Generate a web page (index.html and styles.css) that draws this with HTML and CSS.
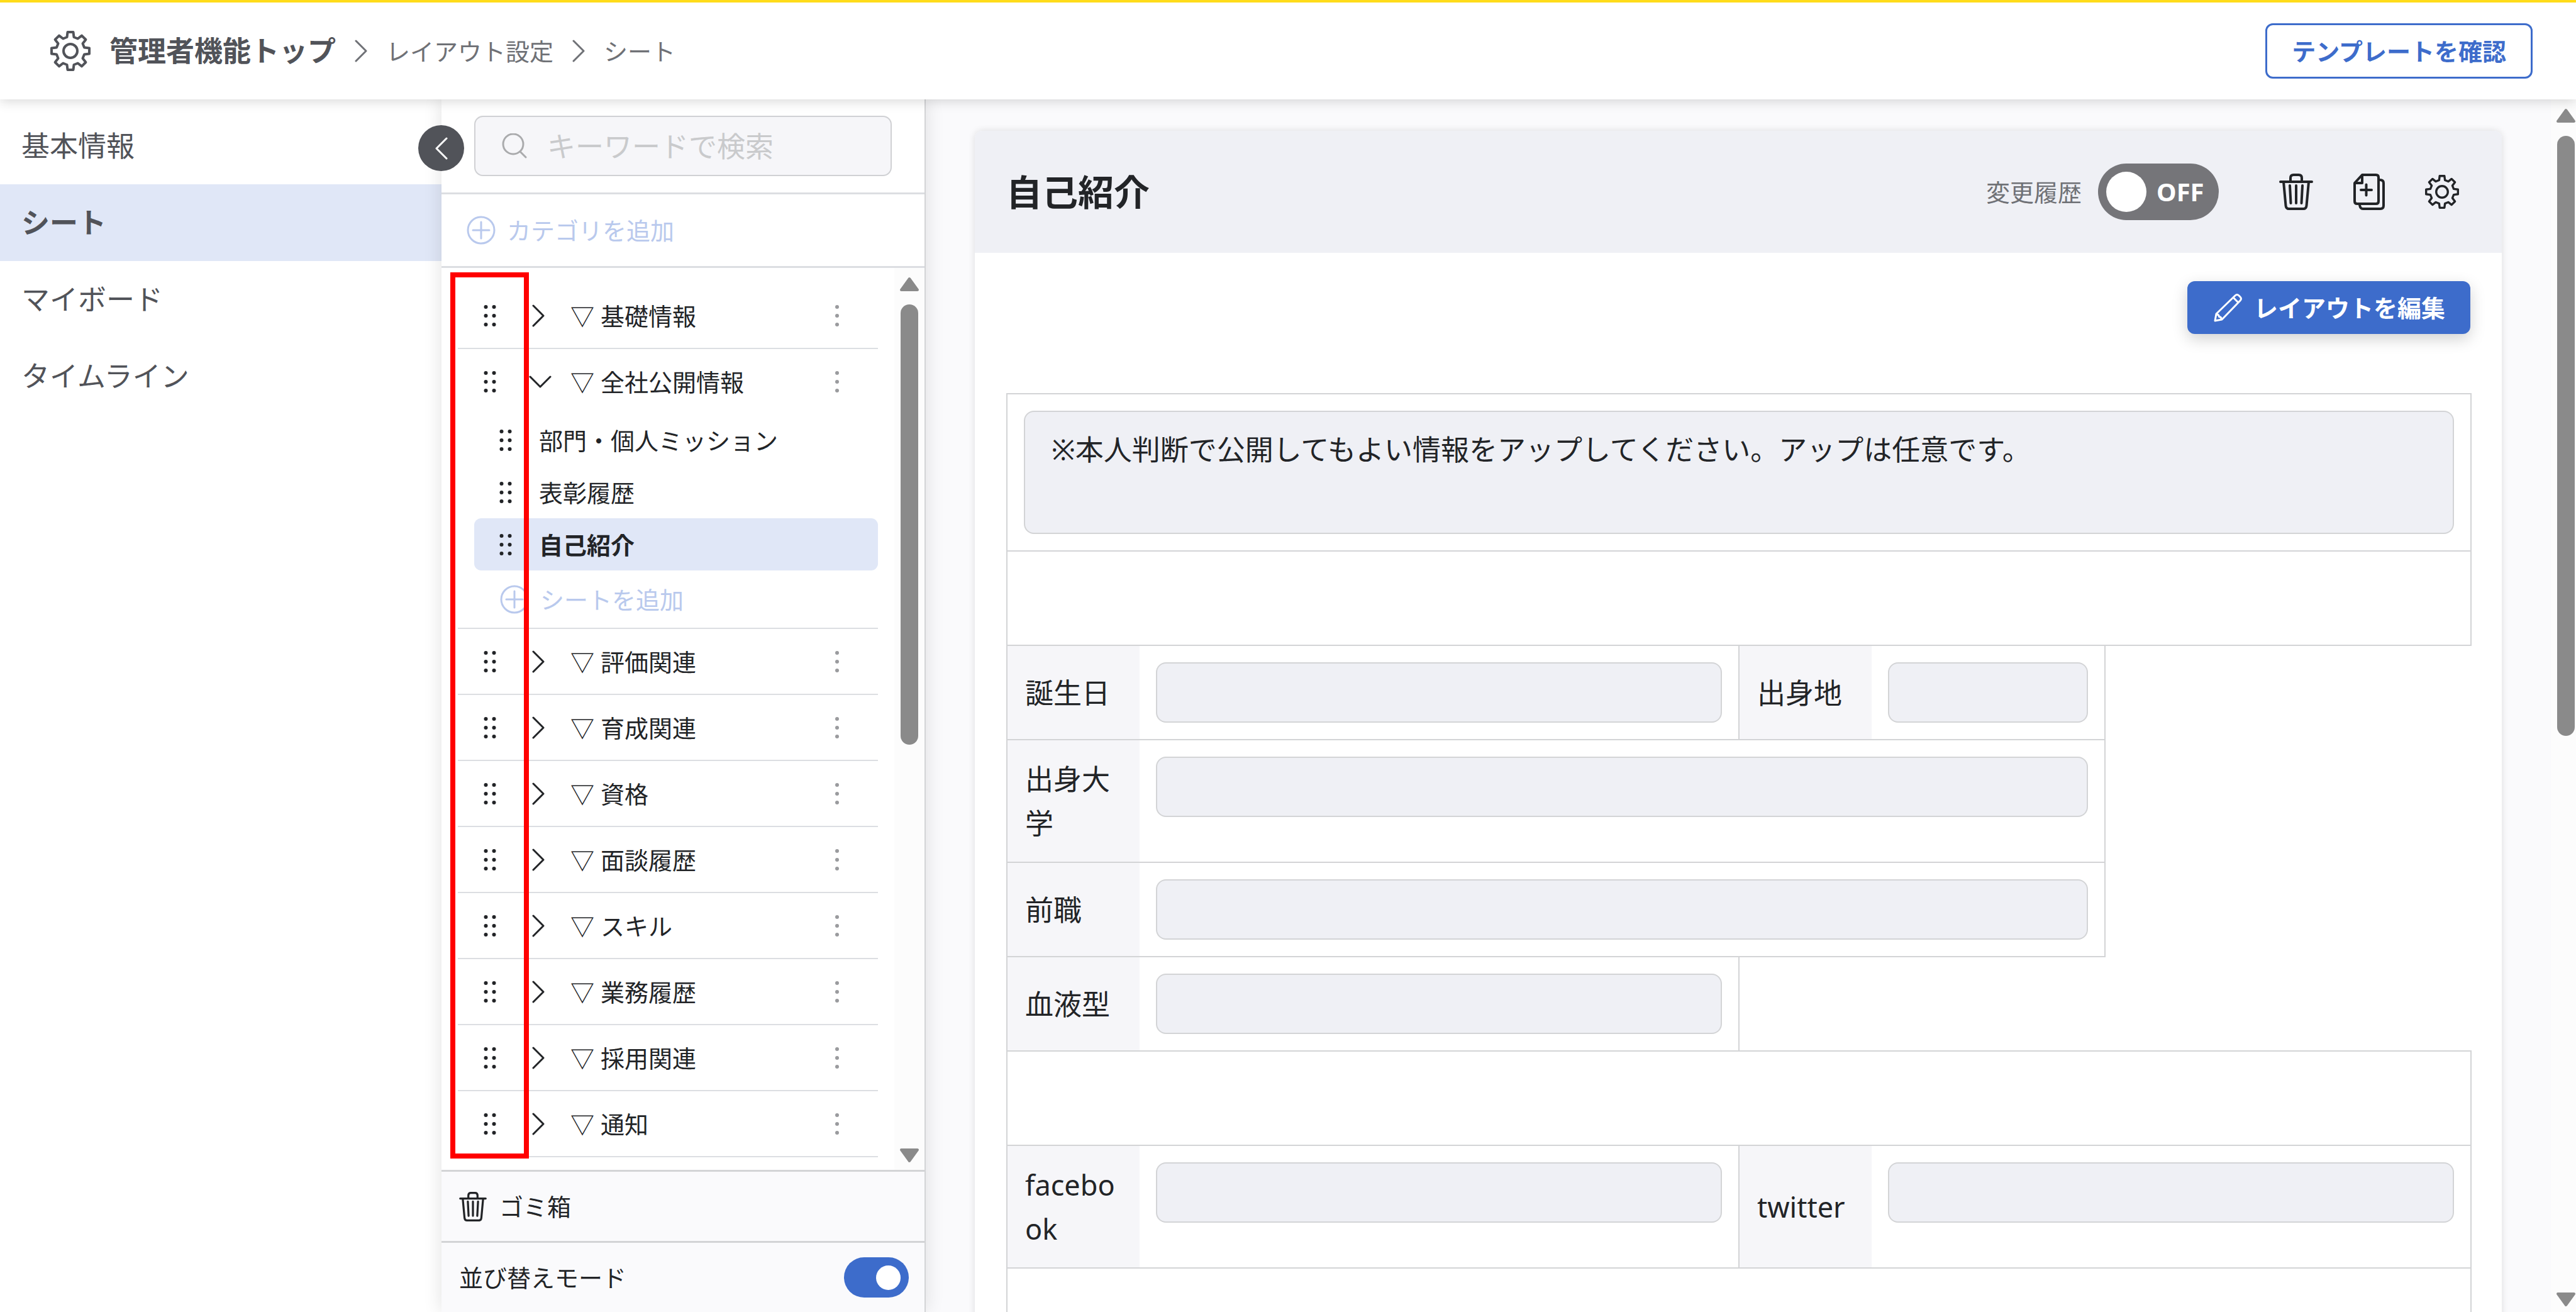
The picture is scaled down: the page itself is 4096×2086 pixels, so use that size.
FILE: index.html
```html
<!DOCTYPE html>
<html lang="ja">
<head>
  <meta charset="UTF-8" />
  <meta name="viewport" content="width=device-width, initial-scale=1.0"/>
  <title>シート - レイアウト設定</title>
  <link rel="stylesheet" href="styles.css">
</head>
<body>

  <!-- Icon set -->
  <svg class="icon-set" aria-hidden="true">
    <symbol id="gear" viewBox="-32 -32 64 64">
      <path d="M-4.5-30L4.5-30 5.5-22 11.7-19.5 18-24.4 24.4-18 19.5-11.7 22-5.5 30-4.5 30 4.5 22 5.5 19.5 11.7 24.4 18 18 24.4 11.7 19.5 5.5 22 4.5 30-4.5 30-5.5 22-11.7 19.5-18 24.4-24.4 18-19.5 11.7-22 5.5-30 4.5-30-4.5-22-5.5-19.5-11.7-24.4-18-18-24.4-11.7-19.5-5.5-22Z"/>
      <circle r="11"/>
    </symbol>
    <symbol id="trash" viewBox="0 0 54 58">
      <path d="M2 13H52M18 12V7q0-5 5-5h8q5 0 5 5v5M7 13l3.500 38q.5 5 5 5h23q4.500 0 5-5L47 13M17 19l1.500 28M27 19v28M37 19l-1.500 28"/>
    </symbol>
    <symbol id="copy" viewBox="0 0 50 58">
      <path d="M14 2H36q4 0 4 4V44q0 4-4 4H6q-4 0-4-4V15ZM14 3V15H3M42 10q6 0 6 5V51q0 5-5 5H15q-4 0-5-6M20.500 17.500v17M12 26h17"/>
    </symbol>
    <symbol id="pencil" viewBox="0 0 46 46">
      <path d="M2 44l2-11L34 4q3-3 6 0l2 2q3 3 0 6L13 42ZM31 7l8 8M5 34q3 0 3.500 3.500Q12 38 12 41"/>
    </symbol>
    <symbol id="right" viewBox="0 0 20 36">
      <path d="M2 2l16 16L2 34"/>
    </symbol>
    <symbol id="down" viewBox="0 0 36 20">
      <path d="M2 2l16 16L34 2"/>
    </symbol>
    <symbol id="plus" viewBox="0 0 46 46">
      <path d="M23 10v26M10 23h26"/>
      <circle cx="23" cy="23" r="21"/>
    </symbol>
    <symbol id="search" viewBox="0 0 40 40">
      <circle cx="18" cy="17" r="16"/>
      <path d="M29 29l9 9"/>
    </symbol>
    <symbol id="drag" viewBox="0 0 20 36">
      <circle cx="3.500" cy="4" r="3"/><circle cx="16.500" cy="4" r="3"/>
      <circle cx="3.500" cy="18" r="3"/><circle cx="16.500" cy="18" r="3"/>
      <circle cx="3.500" cy="32" r="3"/><circle cx="16.500" cy="32" r="3"/>
    </symbol>
    <symbol id="more" viewBox="0 0 14 36">
      <circle cx="7" cy="4" r="3"/><circle cx="7" cy="18" r="3"/><circle cx="7" cy="32" r="3"/>
    </symbol>
    <symbol id="scroll-up" viewBox="0 0 32 24">
      <path d="M16 3L29 21H3Z"/>
    </symbol>
    <symbol id="scroll-down" viewBox="0 0 32 24">
      <path d="M16 21L29 3H3Z"/>
    </symbol>
  </svg>

  <header class="header">
    <nav class="breadcrumb" aria-label="パンくず">
      <svg class="icon icon-lg"><use href="#gear"/></svg>
      <a class="breadcrumb-top" href="#">管理者機能トップ</a>
      <svg class="chevron"><use href="#right"/></svg>
      <a href="#">レイアウト設定</a>
      <svg class="chevron"><use href="#right"/></svg>
      <a href="#">シート</a>
    </nav>
    <button type="button" class="btn btn-outline">テンプレートを確認</button>
  </header>

  <div class="layout">
    <nav class="menu" aria-label="設定メニュー">
      <a href="#">基本情報</a>
      <a href="#" class="active">シート</a>
      <a href="#">マイボード</a>
      <a href="#">タイムライン</a>
    </nav>

    <aside class="panel">
      <button type="button" class="collapse" aria-label="メニューを閉じる">
        <svg class="chevron flip"><use href="#right"/></svg>
      </button>

      <div class="search">
        <label class="search-box">
          <svg class="search-icon"><use href="#search"/></svg>
          <input type="text" placeholder="キーワードで検索" aria-label="キーワードで検索">
        </label>
      </div>

      <button type="button" class="add add-category"><svg><use href="#plus"/></svg>カテゴリを追加</button>

      <div class="tree">
        <ul class="categories">
          <li>
            <div class="category">
              <svg class="drag"><use href="#drag"/></svg>
              <button type="button" class="toggle" aria-label="開く"><svg class="chevron"><use href="#right"/></svg></button>
              <span>▽ 基礎情報</span>
              <button type="button" class="more" aria-label="メニュー"><svg><use href="#more"/></svg></button>
            </div>
          </li>
          <li>
            <div class="category">
              <svg class="drag"><use href="#drag"/></svg>
              <button type="button" class="toggle" aria-label="閉じる"><svg class="chevron-down"><use href="#down"/></svg></button>
              <span>▽ 全社公開情報</span>
              <button type="button" class="more" aria-label="メニュー"><svg><use href="#more"/></svg></button>
            </div>
            <ul class="sheets">
              <li class="sheet"><svg class="drag"><use href="#drag"/></svg><a href="#">部門・個人ミッション</a></li>
              <li class="sheet"><svg class="drag"><use href="#drag"/></svg><a href="#">表彰履歴</a></li>
              <li class="sheet active"><svg class="drag"><use href="#drag"/></svg><a href="#">自己紹介</a></li>
            </ul>
            <button type="button" class="add add-sheet"><svg><use href="#plus"/></svg>シートを追加</button>
          </li>
          <li>
            <div class="category">
              <svg class="drag"><use href="#drag"/></svg>
              <button type="button" class="toggle" aria-label="開く"><svg class="chevron"><use href="#right"/></svg></button>
              <span>▽ 評価関連</span>
              <button type="button" class="more" aria-label="メニュー"><svg><use href="#more"/></svg></button>
            </div>
          </li>
          <li>
            <div class="category">
              <svg class="drag"><use href="#drag"/></svg>
              <button type="button" class="toggle" aria-label="開く"><svg class="chevron"><use href="#right"/></svg></button>
              <span>▽ 育成関連</span>
              <button type="button" class="more" aria-label="メニュー"><svg><use href="#more"/></svg></button>
            </div>
          </li>
          <li>
            <div class="category">
              <svg class="drag"><use href="#drag"/></svg>
              <button type="button" class="toggle" aria-label="開く"><svg class="chevron"><use href="#right"/></svg></button>
              <span>▽ 資格</span>
              <button type="button" class="more" aria-label="メニュー"><svg><use href="#more"/></svg></button>
            </div>
          </li>
          <li>
            <div class="category">
              <svg class="drag"><use href="#drag"/></svg>
              <button type="button" class="toggle" aria-label="開く"><svg class="chevron"><use href="#right"/></svg></button>
              <span>▽ 面談履歴</span>
              <button type="button" class="more" aria-label="メニュー"><svg><use href="#more"/></svg></button>
            </div>
          </li>
          <li>
            <div class="category">
              <svg class="drag"><use href="#drag"/></svg>
              <button type="button" class="toggle" aria-label="開く"><svg class="chevron"><use href="#right"/></svg></button>
              <span>▽ スキル</span>
              <button type="button" class="more" aria-label="メニュー"><svg><use href="#more"/></svg></button>
            </div>
          </li>
          <li>
            <div class="category">
              <svg class="drag"><use href="#drag"/></svg>
              <button type="button" class="toggle" aria-label="開く"><svg class="chevron"><use href="#right"/></svg></button>
              <span>▽ 業務履歴</span>
              <button type="button" class="more" aria-label="メニュー"><svg><use href="#more"/></svg></button>
            </div>
          </li>
          <li>
            <div class="category">
              <svg class="drag"><use href="#drag"/></svg>
              <button type="button" class="toggle" aria-label="開く"><svg class="chevron"><use href="#right"/></svg></button>
              <span>▽ 採用関連</span>
              <button type="button" class="more" aria-label="メニュー"><svg><use href="#more"/></svg></button>
            </div>
          </li>
          <li>
            <div class="category">
              <svg class="drag"><use href="#drag"/></svg>
              <button type="button" class="toggle" aria-label="開く"><svg class="chevron"><use href="#right"/></svg></button>
              <span>▽ 通知</span>
              <button type="button" class="more" aria-label="メニュー"><svg><use href="#more"/></svg></button>
            </div>
          </li>
        </ul>
        <div class="scrollbar scrollbar-tree">
          <svg><use href="#scroll-up"/></svg>
          <div class="rail"><div class="thumb"></div></div>
          <svg><use href="#scroll-down"/></svg>
        </div>
        <div class="highlight"></div>
      </div>

      <div class="panel-row">
        <a href="#" class="trash-link"><svg class="icon icon-sm"><use href="#trash"/></svg>ゴミ箱</a>
      </div>
      <div class="panel-row">
        <label for="sortMode">並び替えモード</label>
        <input type="checkbox" id="sortMode" class="switch-sm" checked>
      </div>
    </aside>

    <main class="main">
      <section class="card">
        <div class="card-header">
          <h1>自己紹介</h1>
          <label class="history-label" for="history">変更履歴</label>
          <label class="switch"><input type="checkbox" id="history"><span>OFF</span></label>
          <div class="actions">
            <button type="button" aria-label="削除"><svg class="icon"><use href="#trash"/></svg></button>
            <button type="button" aria-label="複製"><svg class="icon"><use href="#copy"/></svg></button>
            <button type="button" aria-label="設定"><svg class="icon"><use href="#gear"/></svg></button>
          </div>
        </div>

        <div class="card-body">
          <button type="button" class="btn btn-primary"><svg><use href="#pencil"/></svg>レイアウトを編集</button>

          <form class="sheet-grid">
            <div class="cell span-4">
              <textarea class="field note" aria-label="メモ" readonly>※本人判断で公開してもよい情報をアップしてください。アップは任意です。</textarea>
            </div>
            <div class="cell span-4"></div>
            <div class="cell span-2">
              <label for="birthday">誕生日</label>
              <input type="text" class="field" id="birthday" readonly>
            </div>
            <div class="cell">
              <label for="birthplace">出身地</label>
              <input type="text" class="field" id="birthplace" readonly>
            </div>
            <div class="cell span-3 row-start">
              <label for="university">出身大学</label>
              <input type="text" class="field" id="university" readonly>
            </div>
            <div class="cell span-3 row-start">
              <label for="previousJob">前職</label>
              <input type="text" class="field" id="previousJob" readonly>
            </div>
            <div class="cell span-2 row-start">
              <label for="bloodType">血液型</label>
              <input type="text" class="field" id="bloodType" readonly>
            </div>
            <div class="cell span-4"></div>
            <div class="cell span-2">
              <label for="facebook">facebook</label>
              <input type="text" class="field" id="facebook" readonly>
            </div>
            <div class="cell span-2">
              <label for="twitter">twitter</label>
              <input type="text" class="field" id="twitter" readonly>
            </div>
            <div class="cell span-4"></div>
          </form>
        </div>
      </section>
    </main>

    <div class="scrollbar scrollbar-main">
      <svg><use href="#scroll-up"/></svg>
      <div class="rail"><div class="thumb"></div></div>
      <svg><use href="#scroll-down"/></svg>
    </div>
  </div>

</body>
</html>
```
FILE: styles.css
```css
* {
  box-sizing: border-box;
  font-family: "Noto Sans", "Noto Sans CJK JP", sans-serif;
}

body {
  margin: 0;
  height: 100vh;
  display: flex;
  flex-direction: column;
  overflow: hidden;
  font-size: 38px;
  line-height: 56px;
  color: #222427;
  background: #fff;
}

a {
  color: inherit;
  text-decoration: none;
}

ul {
  list-style: none;
  margin: 0;
  padding: 0;
}

button {
  padding: 0;
  border: none;
  background: none;
  color: inherit;
  font-size: 38px;
  line-height: 56px;
  cursor: pointer;
}

svg {
  display: block;
  flex-shrink: 0;
  fill: none;
  stroke: currentColor;
  stroke-width: 4;
  stroke-linejoin: round;
  stroke-linecap: round;
}

.icon-set {
  display: none;
}

.icon {
  width: 54px;
  height: 58px;
}

.icon-lg {
  width: 64px;
  height: 64px;
}

.icon-sm {
  width: 44px;
  height: 47px;
}

.chevron {
  width: 20px;
  height: 36px;
  stroke-width: 3;
}

.chevron-down {
  width: 36px;
  height: 20px;
  stroke-width: 3;
}

.drag,
.more svg {
  width: 20px;
  height: 36px;
  fill: currentColor;
  stroke: none;
}

/* Header */
.header {
  position: relative;
  z-index: 2;
  flex-shrink: 0;
  display: flex;
  align-items: center;
  justify-content: space-between;
  height: 158px;
  padding: 0 69px 0 80px;
  border-top: 4px solid #ffdc1a;
  background: #fff;
  box-shadow: 0 3px 18px rgba(0, 0, 0, 0.16);
  color: #515359;
}

.breadcrumb {
  display: flex;
  align-items: center;
  gap: 30px;
  color: #6f7176;
}

.breadcrumb .icon-lg,
.breadcrumb-top {
  color: #515359;
}

.breadcrumb-top {
  font-size: 45px;
  font-weight: 700;
}

.btn {
  display: flex;
  align-items: center;
  border-radius: 12px;
  font-weight: 700;
}

.btn-outline {
  height: 88px;
  padding: 0 39px;
  border: 3px solid #3d6ccb;
  color: #3d6ccb;
}

.btn-primary {
  gap: 18px;
  height: 84px;
  margin-left: auto;
  padding: 0 40px 0 42px;
  background: #3d6ccb;
  color: #fff;
  box-shadow: 0 8px 24px rgba(0, 0, 0, 0.18);
}

.btn-primary svg {
  width: 46px;
  height: 46px;
  stroke-width: 3;
}

/* Left menu */
.layout {
  flex: 1;
  min-height: 0;
  display: flex;
}

.menu {
  width: 702px;
  flex-shrink: 0;
  padding-top: 13px;
  font-size: 45px;
  color: #515359;
}

.menu a {
  display: flex;
  align-items: center;
  height: 122px;
  padding-left: 34px;
}

.menu .active {
  background: #e0e7f7;
  font-weight: 700;
}

/* Sheet panel */
.panel {
  position: relative;
  z-index: 1;
  width: 770px;
  flex-shrink: 0;
  display: flex;
  flex-direction: column;
  border-right: 2px solid #d3d4d6;
  background: #fff;
  box-shadow: 0 0 28px rgba(0, 0, 0, 0.12);
}

.collapse {
  position: absolute;
  top: 41px;
  left: -37px;
  display: flex;
  align-items: center;
  justify-content: center;
  width: 73px;
  height: 73px;
  border-radius: 50%;
  background: #515359;
  color: #fff;
}

.flip {
  transform: scaleX(-1);
}

.search {
  padding: 26px 52px;
  border-bottom: 3px solid #dcdee2;
}

.search-box {
  display: flex;
  align-items: center;
  gap: 32px;
  height: 96px;
  padding: 0 42px;
  border: 2px solid #d0d1d4;
  border-radius: 14px;
  background: #f6f6f9;
}

.search-icon {
  width: 40px;
  height: 40px;
  stroke-width: 3;
  color: #aaabad;
}

.search-box input {
  flex: 1;
  min-width: 0;
  padding: 0;
  border: none;
  outline: none;
  background: none;
  font-size: 45px;
}

.search-box input::placeholder {
  color: #c9cacc;
}

.add {
  display: flex;
  align-items: center;
  gap: 18px;
  color: #b9c9ed;
}

.add svg {
  width: 46px;
  height: 46px;
  stroke-width: 3;
}

.add-category {
  height: 117px;
  padding-left: 40px;
  border-bottom: 3px solid #dcdee2;
}

.add-sheet {
  height: 91px;
  padding-left: 67px;
}

.tree {
  position: relative;
  flex: 1;
  min-height: 0;
  display: flex;
}

.categories {
  flex: 1;
  padding: 24px 26px 0 26px;
}

.categories > li {
  border-bottom: 2px solid #dcdee2;
}

.category {
  display: flex;
  align-items: center;
  height: 103px;
  padding: 0 55px 0 41px;
}

.toggle {
  width: 36px;
  margin: 0 30px 0 52px;
  display: flex;
}

.toggle .chevron {
  margin-left: 5px;
}

.more {
  margin-left: auto;
  color: #9a9b9e;
}

.sheet {
  display: flex;
  align-items: center;
  gap: 43px;
  height: 83px;
  margin-left: 26px;
  padding-left: 40px;
  border-radius: 11px;
}

.sheet.active {
  background: #e0e7f7;
  font-weight: 700;
}

.highlight {
  position: absolute;
  top: 7px;
  bottom: 18px;
  left: 14px;
  width: 125px;
  border: 8px solid #f00;
}

.panel-row {
  display: flex;
  align-items: center;
  justify-content: space-between;
  height: 113px;
  padding: 0 25px 0 28px;
  border-top: 3px solid #d3d4d6;
  background: #fafafc;
}

.trash-link {
  display: flex;
  align-items: center;
  gap: 20px;
}

.switch-sm {
  appearance: none;
  display: flex;
  align-items: center;
  justify-content: flex-end;
  width: 103px;
  height: 64px;
  margin: 0;
  padding: 0 13px;
  border-radius: 32px;
  background: #3d6ccb;
}

.switch-sm::before {
  content: "";
  width: 39px;
  height: 39px;
  border-radius: 50%;
  background: #fff;
}

/* Scrollbars */
.scrollbar {
  flex-shrink: 0;
  display: flex;
  flex-direction: column;
  align-items: center;
  gap: 20px;
  background: #fcfcfc;
  color: #8a8a8a;
}

.scrollbar svg {
  width: 32px;
  height: 24px;
  fill: currentColor;
}

.rail {
  flex: 1;
}

.thumb {
  width: 28px;
  height: 53%;
  border-radius: 14px;
  background: #8a8a8a;
}

.scrollbar-tree {
  width: 48px;
  padding: 14px 0 11px;
}

.scrollbar-main {
  width: 40px;
  padding: 14px 0 8px 8px;
}

.scrollbar-main .thumb {
  height: 52.5%;
}

/* Main card */
.main {
  flex: 1;
  min-width: 0;
  padding: 50px 78px 0;
  overflow: hidden;
  background: #fafafc;
}

.card {
  min-height: 100%;
  border-radius: 12px;
  background: #fff;
  box-shadow: 0 0 12px rgba(0, 0, 0, 0.12);
}

.card-header {
  display: flex;
  align-items: center;
  height: 194px;
  padding: 0 68px 0 50px;
  border-radius: 12px 12px 0 0;
  background: #eff0f5;
}

h1 {
  flex: 1;
  margin: 0;
  font-size: 57px;
  line-height: 84px;
}

.history-label {
  color: #6f7176;
}

.switch {
  display: flex;
  align-items: center;
  gap: 16px;
  width: 192px;
  height: 90px;
  margin: 0 96px 0 26px;
  padding: 0 13px;
  border-radius: 45px;
  background: #757579;
  color: #fff;
  font-size: 40px;
  font-weight: 700;
}

.switch input {
  appearance: none;
  width: 64px;
  height: 64px;
  margin: 0;
  border-radius: 50%;
  background: #fff;
}

.actions {
  display: flex;
  gap: 62px;
}

.card-body {
  padding: 45px 50px 0;
}

.sheet-grid {
  display: grid;
  grid-template-columns: repeat(4, minmax(0, 1fr));
  margin-top: 94px;
  padding-bottom: 2px;
  font-size: 45px;
  line-height: 70px;
}

/* cells overlap by one border so that lines are not doubled */
.cell {
  display: flex;
  min-height: 152px;
  margin: 0 -2px -2px 0;
  border: 2px solid #d3d4d6;
}

.cell label {
  display: flex;
  align-items: center;
  width: 210px;
  flex-shrink: 0;
  padding: 27px 28px 26px;
  background: #f6f6f9;
  word-break: break-all;
}

.span-2 {
  grid-column-end: span 2;
}

.span-3 {
  grid-column-end: span 3;
}

.span-4 {
  grid-column-end: span 4;
}

.row-start {
  grid-column-start: 1;
}

.field {
  flex: 1;
  min-width: 0;
  height: 96px;
  margin: 26px;
  padding: 0 40px;
  border: 2px solid #d3d4d6;
  border-radius: 16px;
  outline: none;
  background: #eff0f5;
  color: #222427;
  font-size: 45px;
}

.note {
  height: 196px;
  padding: 25px 42px;
  line-height: 70px;
  resize: none;
}
```
